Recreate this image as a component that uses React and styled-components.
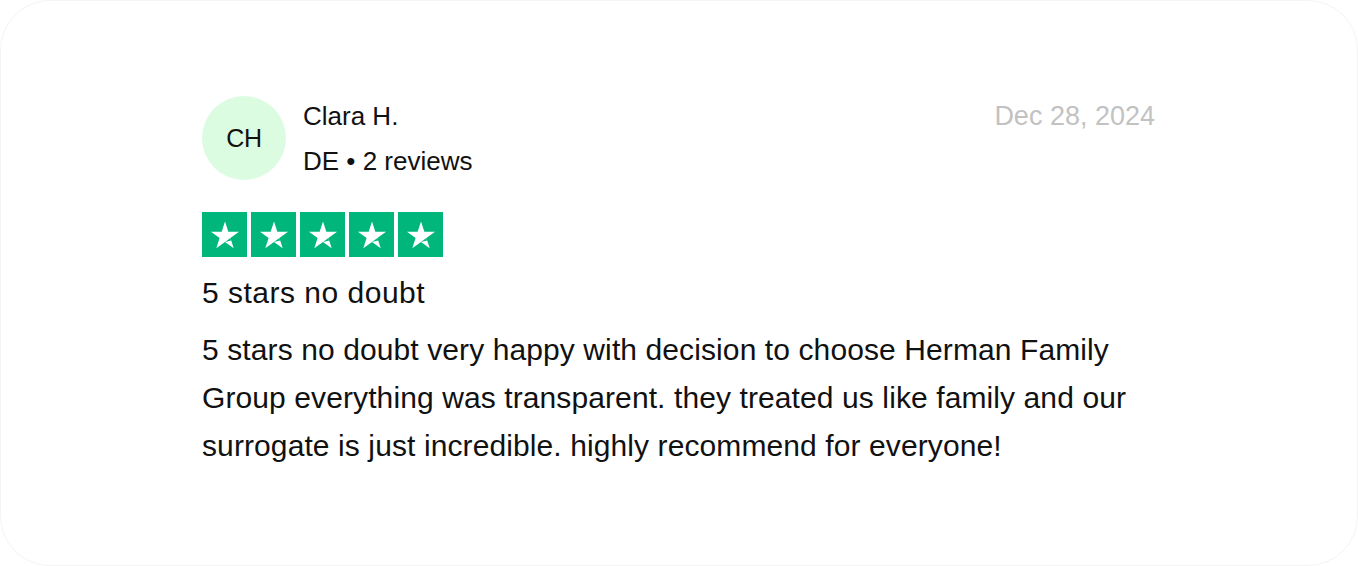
import React from "react";
import styled, { createGlobalStyle } from "styled-components";

const GlobalStyle = createGlobalStyle`
  html, body {
    margin: 0;
    padding: 0;
    background: #ffffff;
  }
  body {
    font-family: "Liberation Sans", Arial, sans-serif;
    color: #111111;
  }
`;

const Card = styled.div`
  box-sizing: border-box;
  width: 1358px;
  height: 566px;
  border: 1px solid #f4f4f4;
  border-radius: 50px;
  background: #ffffff;
  padding: 95px 202px 0 201px;
`;

const Header = styled.div`
  display: flex;
  align-items: flex-start;
  justify-content: space-between;
`;

const Author = styled.div`
  display: flex;
  align-items: flex-start;
  gap: 17px;
`;

const Avatar = styled.div`
  width: 84px;
  height: 84px;
  border-radius: 50%;
  background: #dcfce2;
  display: flex;
  align-items: center;
  justify-content: center;
  font-size: 25px;
  letter-spacing: -0.3px;
  color: #111111;
`;

const Info = styled.div`
  display: flex;
  flex-direction: column;
  margin-top: -2px;
`;

const Line = styled.div`
  font-size: 26px;
  line-height: 45px;
  color: #111111;
`;

const DateText = styled.div`
  font-size: 27px;
  line-height: 45px;
  color: #c2c2c2;
  margin-top: -2px;
`;

const Stars = styled.div`
  display: flex;
  gap: 4px;
  margin-top: 28px;
`;

const StarBox = styled.div`
  width: 45px;
  height: 45px;
  background: #00b67a;
  display: flex;
  align-items: center;
  justify-content: center;
`;

const Title = styled.h3`
  margin: 16px 0 0;
  font-size: 30px;
  font-weight: 400;
  line-height: 40px;
  letter-spacing: 0.5px;
  color: #111111;
`;

const Body = styled.p`
  margin: 13px 0 0;
  font-size: 30px;
  line-height: 48px;
  letter-spacing: 0.1px;
  color: #111111;
  max-width: 945px;
`;

const Star = () => (
  <svg width="34" height="34" viewBox="0 0 24 24">
    <path
      d="M12 2.5l2.35 7.2h7.55l-6.1 4.45 2.35 7.25L12 16.9l-6.15 4.5 2.35-7.25-6.1-4.45h7.55z"
      fill="#ffffff"
    />
    <path d="M15.8 14.15l0.55 1.75L12 16.9z" fill="#00b67a" />
  </svg>
);

export default function App() {
  return (
    <>
      <GlobalStyle />
      <Card>
        <Header>
          <Author>
            <Avatar>CH</Avatar>
            <Info>
              <Line>Clara H.</Line>
              <Line>DE • 2 reviews</Line>
            </Info>
          </Author>
          <DateText>Dec 28, 2024</DateText>
        </Header>
        <Stars>
          {[0, 1, 2, 3, 4].map((i) => (
            <StarBox key={i}>
              <Star />
            </StarBox>
          ))}
        </Stars>
        <Title>5 stars no doubt</Title>
        <Body>
          5 stars no doubt very happy with decision to choose Herman Family
          Group everything was transparent. they treated us like family and our
          surrogate is just incredible. highly recommend for everyone!
        </Body>
      </Card>
    </>
  );
}
